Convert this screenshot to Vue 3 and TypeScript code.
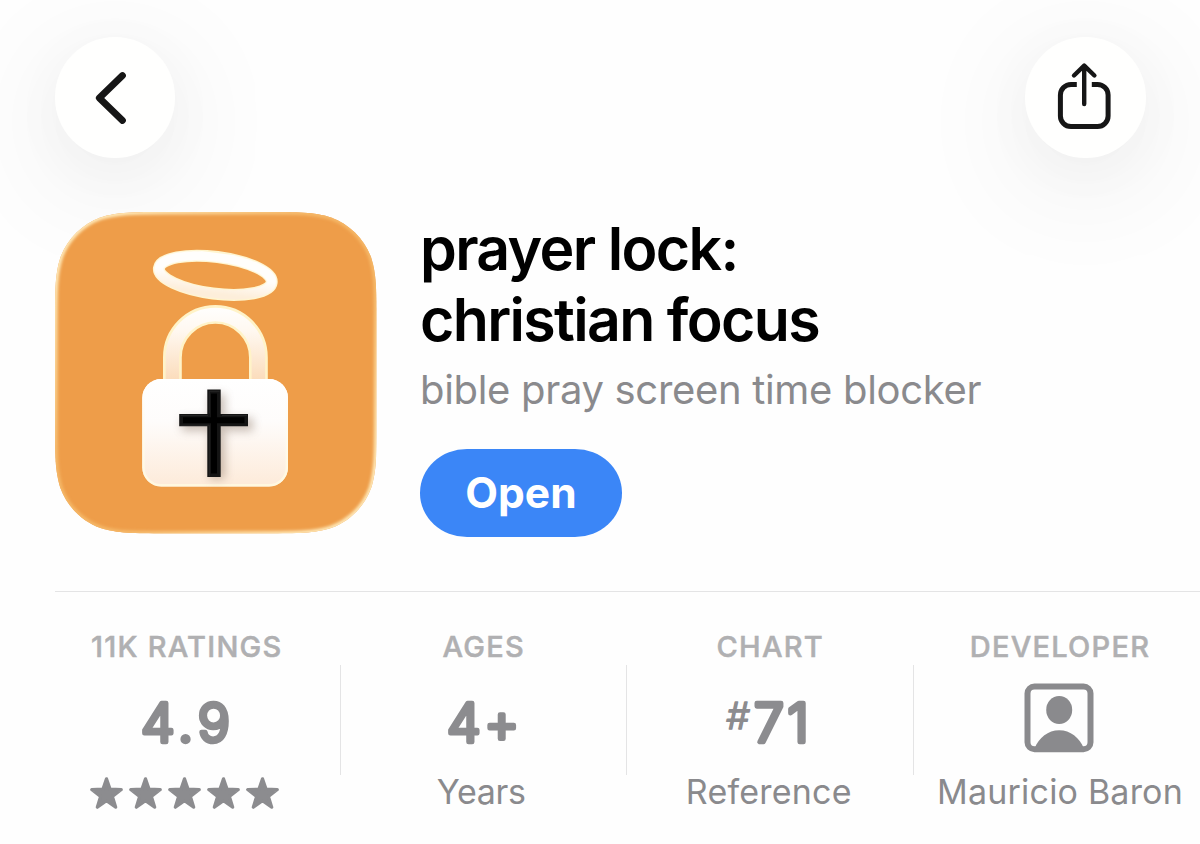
<script setup lang="ts">
interface Stat {
  key: string
  label: string
  value?: string
  caption?: string
}

const stats: Stat[] = [
  { key: 'ratings', label: '11K RATINGS', value: '4.9' },
  { key: 'ages', label: 'AGES', value: '4+', caption: 'Years' },
  { key: 'chart', label: 'CHART', value: '71', caption: 'Reference' },
  { key: 'developer', label: 'DEVELOPER', caption: 'Mauricio Baron' },
]

const stars = [0, 1, 2, 3, 4]

// Continuous-corner rounded rectangle, the curve used for iOS app icons.
function squircle(w: number, h: number, r: number): string {
  const k = [1.52866, 1.08849, 0.86841, 0.63149, 0.37282, 0.16906, 0.07491].map((n) => n * r)
  const [a, b, c, d, e, f, g] = k
  return [
    `M${a} 0H${w - a}`,
    `C${w - b} 0 ${w - c} 0 ${w - d} ${g}C${w - e} ${f} ${w - f} ${e} ${w - g} ${d}C${w} ${c} ${w} ${b} ${w} ${a}`,
    `V${h - a}`,
    `C${w} ${h - b} ${w} ${h - c} ${w - g} ${h - d}C${w - f} ${h - e} ${w - e} ${h - f} ${w - d} ${h - g}C${w - c} ${h} ${w - b} ${h} ${w - a} ${h}`,
    `H${a}`,
    `C${b} ${h} ${c} ${h} ${d} ${h - g}C${e} ${h - f} ${f} ${h - e} ${g} ${h - d}C0 ${h - c} 0 ${h - b} 0 ${h - a}`,
    `V${a}`,
    `C0 ${b} 0 ${c} ${g} ${d}C${f} ${e} ${e} ${f} ${d} ${g}C${c} 0 ${b} 0 ${a} 0Z`,
  ].join('')
}

const iconShape = squircle(321.5, 321.5, 72)
</script>

<template>
  <main class="page">
    <nav class="nav">
      <button class="round" aria-label="Back">
        <svg width="120" height="120" viewBox="0 0 120 120">
          <path d="M67.5 38.5 44.3 61 67.5 83.5" class="chevron" />
        </svg>
      </button>
      <button class="round" aria-label="Share">
        <svg width="120" height="120" viewBox="0 0 120 120">
          <path d="M51.8 47.4H46a10.6 10.6 0 0 0-10.6 10.6V79A10.6 10.6 0 0 0 46 89.6H72.5A10.6 10.6 0 0 0 83.1 79V58A10.6 10.6 0 0 0 72.5 47.4H66.8" class="tray" />
          <path d="M59.2 67V29M49 38.5 59.2 28.6 69.4 38.5" class="arrow" />
        </svg>
      </button>
    </nav>

    <section class="hero">
      <svg class="app-icon" viewBox="0 0 321.5 321.5">
        <defs>
          <clipPath id="iconClip"><path :d="iconShape" /></clipPath>
          <linearGradient id="haloFill" x1="0" y1="0" x2="0" y2="1">
            <stop offset="0.5" stop-color="#fffefc" />
            <stop offset="1" stop-color="#fdeeda" />
          </linearGradient>
          <linearGradient id="shackleFill" gradientUnits="userSpaceOnUse" x1="0" y1="93" x2="0" y2="168">
            <stop offset="0" stop-color="#ffffff" />
            <stop offset="0.35" stop-color="#fff8f0" />
            <stop offset="1" stop-color="#fbdcbb" />
          </linearGradient>
          <linearGradient id="bodyFill" x1="0" y1="0" x2="0" y2="1">
            <stop offset="0" stop-color="#ffffff" />
            <stop offset="0.4" stop-color="#fefcfb" />
            <stop offset="0.98" stop-color="#fdebda" />
          </linearGradient>
          <linearGradient id="edgeFill" x1="0" y1="0" x2="0" y2="1">
            <stop offset="0" stop-color="#ffffff" />
            <stop offset="1" stop-color="#fff8e0" />
          </linearGradient>
          <linearGradient id="rimFill" x1="0" y1="0" x2="1" y2="1">
            <stop offset="0.1" stop-color="#ffe9b8" />
            <stop offset="0.4" stop-color="#f5b868" />
            <stop offset="0.6" stop-color="#f5b868" />
            <stop offset="0.9" stop-color="#ffe9b8" />
          </linearGradient>
          <filter id="soft" x="-10%" y="-10%" width="120%" height="120%"><feGaussianBlur stdDeviation="1.5" /></filter>
          <filter id="thinSoft" x="-10%" y="-10%" width="120%" height="120%"><feGaussianBlur stdDeviation="0.7" /></filter>
          <filter id="crossShadow" x="-50%" y="-50%" width="200%" height="200%"><feGaussianBlur stdDeviation="5" /></filter>
        </defs>
        <g clip-path="url(#iconClip)">
          <rect width="321.5" height="321.5" fill="#ee9d49" />
          <path :d="iconShape" fill="none" stroke="url(#rimFill)" stroke-width="5" filter="url(#soft)" />
        </g>
        <ellipse cx="160.3" cy="63.3" rx="56.8" ry="18.4" transform="rotate(7.2 160.3 63.3)" fill="none" stroke="#fff5cf" stroke-width="12" />
        <ellipse cx="160.3" cy="63.3" rx="56.8" ry="18.4" transform="rotate(7.2 160.3 63.3)" fill="none" stroke="url(#haloFill)" stroke-width="9.5" filter="url(#thinSoft)" />
        <path d="M117.4 168V145.4a43 43 0 0 1 86 0V168" fill="none" stroke="#fff3c8" stroke-width="18.8" />
        <path d="M117.4 168V145.4a43 43 0 0 1 86 0V168" fill="none" stroke="url(#shackleFill)" stroke-width="13.5" filter="url(#thinSoft)" />
        <rect x="87.3" y="167" width="145.7" height="107.5" rx="19" fill="url(#bodyFill)" />
        <rect x="88.5" y="168.2" width="143.3" height="105.1" rx="17.8" fill="none" stroke="url(#edgeFill)" stroke-width="2.4" />
        <path d="M154.5 182H170V206H198V219H170V267H154.5V219H127V206H154.5Z" fill="#7a6250" opacity="0.4" filter="url(#crossShadow)" />
        <path d="M152.3 177.6H165.7V202H193V214.3H165.7V265H152.3V214.3H124.2V202H152.3Z" fill="#141414" />
        <path d="M159 181.5V261.5M128 208.2H189.5" fill="none" stroke="#000" stroke-width="6" filter="url(#thinSoft)" />
        <path d="M154.3 264V213.2H125.5M154.3 201.5V179.3H164.5M167 203.5H192M125.5 203.5H153" fill="none" stroke="#333" stroke-width="0.8" opacity="0.7" />
      </svg>

      <div class="info">
        <h1 class="title">prayer lock:<br />christian focus</h1>
        <p class="subtitle">bible pray screen time blocker</p>
        <button class="open">Open</button>
      </div>
    </section>

    <section class="stats">
      <div v-for="s in stats" :key="s.key" class="stat" :class="s.key">
        <div class="label">{{ s.label }}</div>
        <svg v-if="s.value" class="value" width="200" height="106" viewBox="0 0 200 106">
          <text v-if="s.key === 'chart'" transform="translate(67.5 65.3) skewX(-3)" class="hash">#</text>
          <text :x="s.key === 'chart' ? 113 : 101" y="78.3" class="num">{{ s.value }}</text>
        </svg>
        <svg v-else class="value" width="200" height="106" viewBox="0 0 200 106">
          <rect x="67.5" y="22.5" width="63" height="62.8" rx="7" class="frame" />
          <ellipse cx="99.2" cy="46" rx="13" ry="14" class="solid" />
          <path d="M74.5 84.5C79 73.5 88 66.2 99.2 66.2S119.4 73.5 123.9 84.5Z" class="solid" />
        </svg>
        <div v-if="s.caption" class="caption">{{ s.caption }}</div>
        <div v-else class="stars">
          <svg v-for="n in stars" :key="n" width="39" height="42" viewBox="0 0 39 42">
            <path d="M19.5 8.8 23.1 19.2 34.3 19.6 25.4 26.4 28.7 37.2 19.5 30.8 10.3 37.2 13.6 26.4 4.7 19.6 15.9 19.2Z" class="star" />
          </svg>
        </div>
      </div>
    </section>
  </main>
</template>

<style>
html,
body {
  margin: 0;
  background: #fefefe;
}
</style>

<style scoped>
.page {
  width: 1200px;
  height: 844px;
  overflow: hidden;
  box-sizing: border-box;
  padding-top: 37px;
  background: #fefefe;
  font-family: Inter, "Liberation Sans", sans-serif;
  color: #000;
}
button {
  border: 0;
  padding: 0;
  font-family: inherit;
}
.nav {
  display: flex;
  justify-content: space-between;
  padding: 0 54.5px;
  height: 120.5px;
}
.round {
  width: 120.5px;
  height: 120.5px;
  border-radius: 50%;
  background: #fffffe;
  box-shadow: 0 24px 120px 14px rgba(0, 0, 0, 0.06), 0 12px 60px rgba(0, 0, 0, 0.03);
}
.round svg {
  display: block;
}
.chevron,
.tray,
.arrow {
  fill: none;
  stroke: #161616;
  stroke-linejoin: round;
}
.chevron {
  stroke-width: 6.8;
  stroke-linecap: round;
}
.tray {
  stroke-width: 5;
}
.arrow {
  stroke-width: 4.4;
  stroke-linecap: round;
}
.hero {
  display: flex;
  gap: 43.5px;
  margin: 54.5px 0 57px 55px;
  height: 322px;
}
.app-icon {
  position: relative;
  flex: none;
  width: 321.5px;
  height: 321.5px;
}
.info {
  padding-top: 1px;
}
.title {
  margin: 0;
  font-size: 59px;
  line-height: 71px;
  font-weight: 600;
  letter-spacing: -1.66px;
  white-space: nowrap;
}
.subtitle {
  margin: 10px 0 34px;
  font-size: 40px;
  line-height: 50px;
  letter-spacing: -0.32px;
  color: #8a8a8d;
  white-space: nowrap;
}
.open {
  display: block;
  width: 202px;
  height: 87.5px;
  border-radius: 47px / 43.75px;
  background: #3b86f7;
  color: #fff;
  font-size: 42.5px;
  font-weight: 700;
  line-height: 87.5px;
  text-align: center;
}
.stats {
  display: grid;
  grid-template-columns: 285.5px 286.5px 286.5px 293px;
  margin-left: 55px;
  border-top: 1px solid #e4e4e5;
  padding-top: 36px;
}
.stat {
  position: relative;
  display: flex;
  flex-direction: column;
  align-items: center;
  white-space: nowrap;
}
.stat.ratings {
  margin-left: -22px;
}
.stat:not(:last-child)::after {
  content: "";
  position: absolute;
  right: 0;
  top: 37px;
  width: 1px;
  height: 110px;
  background: #e4e4e5;
}
.label {
  font-size: 29px;
  line-height: 37px;
  height: 36px;
  font-weight: 500;
  letter-spacing: 1.25px;
  color: #b0b0b2;
  -webkit-text-stroke: 0.5px #b0b0b2;
}
.value {
  display: block;
}
.num,
.hash {
  fill: #8c8c8f;
  stroke: #8c8c8f;
  stroke-linejoin: round;
  text-anchor: middle;
}
.num {
  font-size: 53.5px;
  font-weight: 300;
  stroke-width: 4.6px;
  letter-spacing: 3.6px;
}
.hash {
  font-size: 37px;
  font-weight: 300;
  stroke-width: 1.6px;
}
.ratings .num {
  letter-spacing: 5px;
}
.frame {
  fill: none;
  stroke: #8a8a8d;
  stroke-width: 6;
}
.solid {
  fill: #8a8a8d;
}
.caption {
  font-size: 34px;
  line-height: 43px;
  letter-spacing: 0.2px;
  color: #8a8a8d;
}
.ages .caption {
  margin-right: 5px;
  letter-spacing: -0.3px;
}
.chart .caption {
  margin-right: 3px;
}
.stars {
  display: flex;
  margin-right: 4px;
}
.star {
  fill: #8c8c8f;
  stroke: #8c8c8f;
  stroke-width: 3.2;
  stroke-linejoin: round;
}
</style>
